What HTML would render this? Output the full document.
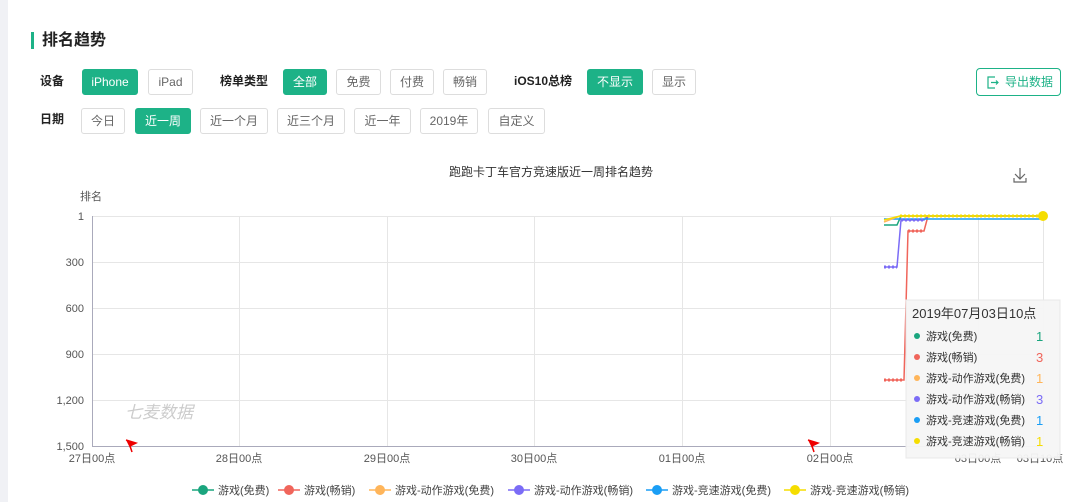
<!DOCTYPE html>
<html><head><meta charset="utf-8"><style>
*{margin:0;padding:0;box-sizing:border-box}
body{width:1080px;height:502px;background:#fff;font-family:"Liberation Sans","Noto Sans CJK SC",sans-serif;position:relative;overflow:hidden;color:#333}
.strip{position:absolute;left:0;top:0;width:8px;height:502px;background:#f0f1f5}
.t{position:absolute;left:31px;top:32px;font-size:16px;font-weight:bold;color:#222;padding-left:8px;border-left:3px solid #1db287;line-height:17px}
.lbl{position:absolute;font-size:12px;font-weight:bold;color:#222;line-height:14px}
.b{position:absolute;height:26px;border:1px solid #ddd;border-radius:3px;font-size:12px;color:#666;text-align:center;line-height:24px;background:#fff}
.b.on{background:#1db287;border-color:#1db287;color:#fff}
.exp{position:absolute;left:976px;top:68px;width:85px;height:28px;border:1px solid #1db287;border-radius:4px;color:#1db287;font-size:12px;line-height:26px;padding-left:28px}
</style></head><body>
<div class="strip"></div>
<div class="t">排名趋势</div>
<div class="lbl" style="left:40px;top:74px">设备</div>
<div class="b on" style="left:82px;top:69px;width:56px">iPhone</div>
<div class="b" style="left:148px;top:69px;width:45px">iPad</div>
<div class="lbl" style="left:220px;top:74px">榜单类型</div>
<div class="b on" style="left:283px;top:69px;width:44px">全部</div>
<div class="b" style="left:336px;top:69px;width:45px">免费</div>
<div class="b" style="left:390px;top:69px;width:44px">付费</div>
<div class="b" style="left:443px;top:69px;width:44px">畅销</div>
<div class="lbl" style="left:514px;top:74px">iOS10总榜</div>
<div class="b on" style="left:587px;top:69px;width:56px">不显示</div>
<div class="b" style="left:652px;top:69px;width:44px">显示</div>
<div class="exp"><svg style="position:absolute;left:10px;top:7px" width="12" height="13" viewBox="0 0 12 13" fill="none" stroke="#1db287" stroke-width="1.2"><path d="M8 1H1v11h7M4 6.5h7M9 4.5l2 2-2 2"/></svg>导出数据</div>
<div class="lbl" style="left:40px;top:112px">日期</div>
<div class="b" style="left:81px;top:108px;width:44px">今日</div>
<div class="b on" style="left:135px;top:108px;width:56px">近一周</div>
<div class="b" style="left:200px;top:108px;width:68px">近一个月</div>
<div class="b" style="left:277px;top:108px;width:68px">近三个月</div>
<div class="b" style="left:354px;top:108px;width:57px">近一年</div>
<div class="b" style="left:420px;top:108px;width:58px">2019年</div>
<div class="b" style="left:488px;top:108px;width:57px">自定义</div>
<svg style="position:absolute;left:0;top:0" width="1080" height="502">
<text x="551" y="176" font-size="12" fill="#333" text-anchor="middle">跑跑卡丁车官方竞速版近一周排名趋势</text>
<g stroke="#666" fill="none" stroke-width="1.2"><path d="M1020 168v11M1015 174l5 5 5-5M1014 178v4h12v-4"/></g>
<text x="80" y="200" font-size="11" fill="#555">排名</text>
<g stroke="#e6e6e6" stroke-width="1">
<path d="M92 216.5H1043M92 262.5H1043M92 308.5H1043M92 354.5H1043M92 400.5H1043"/>
<path d="M239.5 216V446M387.5 216V446M534.5 216V446M682.5 216V446M830.5 216V446M978.5 216V446M1043.5 216V446"/>
</g>
<path d="M92.5 216V446M92 446.5H1043" stroke="#aab" stroke-width="1"/>
<g font-size="11" fill="#555" text-anchor="end">
<text x="84" y="220">1</text><text x="84" y="266">300</text><text x="84" y="312">600</text><text x="84" y="358">900</text><text x="84" y="404">1,200</text><text x="84" y="450">1,500</text></g>
<g font-size="11" fill="#555" text-anchor="middle">
<text x="92" y="462">27日00点</text><text x="239" y="462">28日00点</text><text x="387" y="462">29日00点</text><text x="534" y="462">30日00点</text><text x="682" y="462">01日00点</text><text x="830" y="462">02日00点</text><text x="978" y="462">03日00点</text><text x="1040" y="462">03日10点</text></g>
<text x="125" y="418" font-size="17" fill="#ccc" font-style="italic">七麦数据</text>
<path d="M126 440l10 3-6 3 2 6" stroke="#e00" stroke-width="1.5" fill="#e00"/>
<path d="M808 440l10 3-6 3 2 6" stroke="#e00" stroke-width="1.5" fill="#e00"/>
<g fill="none" stroke-width="1.5">
<path d="M884 380H904L908 231H924L928 216H1043" stroke="#f0655b"/>
<path d="M884 267H897L901 220H924L928 216H1043" stroke="#7b6cf6"/>
<path d="M884 225H897L901 216H1043" stroke="#1aa57e"/>
<path d="M884 219H1043" stroke="#1a9ef5"/>
<path d="M884 222L900 216H1043" stroke="#ffb55a"/>
<path d="M884 220L900 216H1043" stroke="#f5dd00"/>
</g>
<g fill="#f5dd00"><circle cx="1043" cy="216" r="5"/></g>
<g stroke="#f5dd00" stroke-dasharray="2 2" stroke-width="3"><path d="M900 216H1040"/></g>
<g stroke="#f0655b" stroke-dasharray="2 2" stroke-width="3"><path d="M884 380H904M908 231H924"/></g>
<g stroke="#7b6cf6" stroke-dasharray="2 2" stroke-width="3"><path d="M884 267H897M901 220H924"/></g>
<rect x="906" y="300" width="154" height="158" fill="#f5f5f5" fill-opacity="0.95" stroke="#e8e8e8"/>
<text x="912" y="318" font-size="13" fill="#333">2019年07月03日10点</text>
<g font-size="11" fill="#333">
<circle cx="917" cy="336" r="3" fill="#1aa57e"/><text x="926" y="340">游戏(免费)</text><text x="1036" y="341" fill="#1aa57e" font-size="13">1</text>
<circle cx="917" cy="357" r="3" fill="#f0655b"/><text x="926" y="361">游戏(畅销)</text><text x="1036" y="362" fill="#f0655b" font-size="13">3</text>
<circle cx="917" cy="378" r="3" fill="#ffb55a"/><text x="926" y="382">游戏-动作游戏(免费)</text><text x="1036" y="383" fill="#ffb55a" font-size="13">1</text>
<circle cx="917" cy="399" r="3" fill="#7b6cf6"/><text x="926" y="403">游戏-动作游戏(畅销)</text><text x="1036" y="404" fill="#7b6cf6" font-size="13">3</text>
<circle cx="917" cy="420" r="3" fill="#1a9ef5"/><text x="926" y="424">游戏-竞速游戏(免费)</text><text x="1036" y="425" fill="#1a9ef5" font-size="13">1</text>
<circle cx="917" cy="441" r="3" fill="#f5dd00"/><text x="926" y="445">游戏-竞速游戏(畅销)</text><text x="1036" y="446" fill="#f5dd00" font-size="13">1</text>
</g>
<g font-size="11" fill="#444" stroke-width="1.5">
<path d="M192 490H214" stroke="#1aa57e"/><circle cx="203" cy="490" r="5" fill="#1aa57e"/><text x="218" y="494">游戏(免费)</text>
<path d="M278 490H300" stroke="#f0655b"/><circle cx="289" cy="490" r="5" fill="#f0655b"/><text x="304" y="494">游戏(畅销)</text>
<path d="M369 490H391" stroke="#ffb55a"/><circle cx="380" cy="490" r="5" fill="#ffb55a"/><text x="395" y="494">游戏-动作游戏(免费)</text>
<path d="M508 490H530" stroke="#7b6cf6"/><circle cx="519" cy="490" r="5" fill="#7b6cf6"/><text x="534" y="494">游戏-动作游戏(畅销)</text>
<path d="M646 490H668" stroke="#1a9ef5"/><circle cx="657" cy="490" r="5" fill="#1a9ef5"/><text x="672" y="494">游戏-竞速游戏(免费)</text>
<path d="M784 490H806" stroke="#f5dd00"/><circle cx="795" cy="490" r="5" fill="#f5dd00"/><text x="810" y="494">游戏-竞速游戏(畅销)</text>
</g>
</svg>
</body></html>
